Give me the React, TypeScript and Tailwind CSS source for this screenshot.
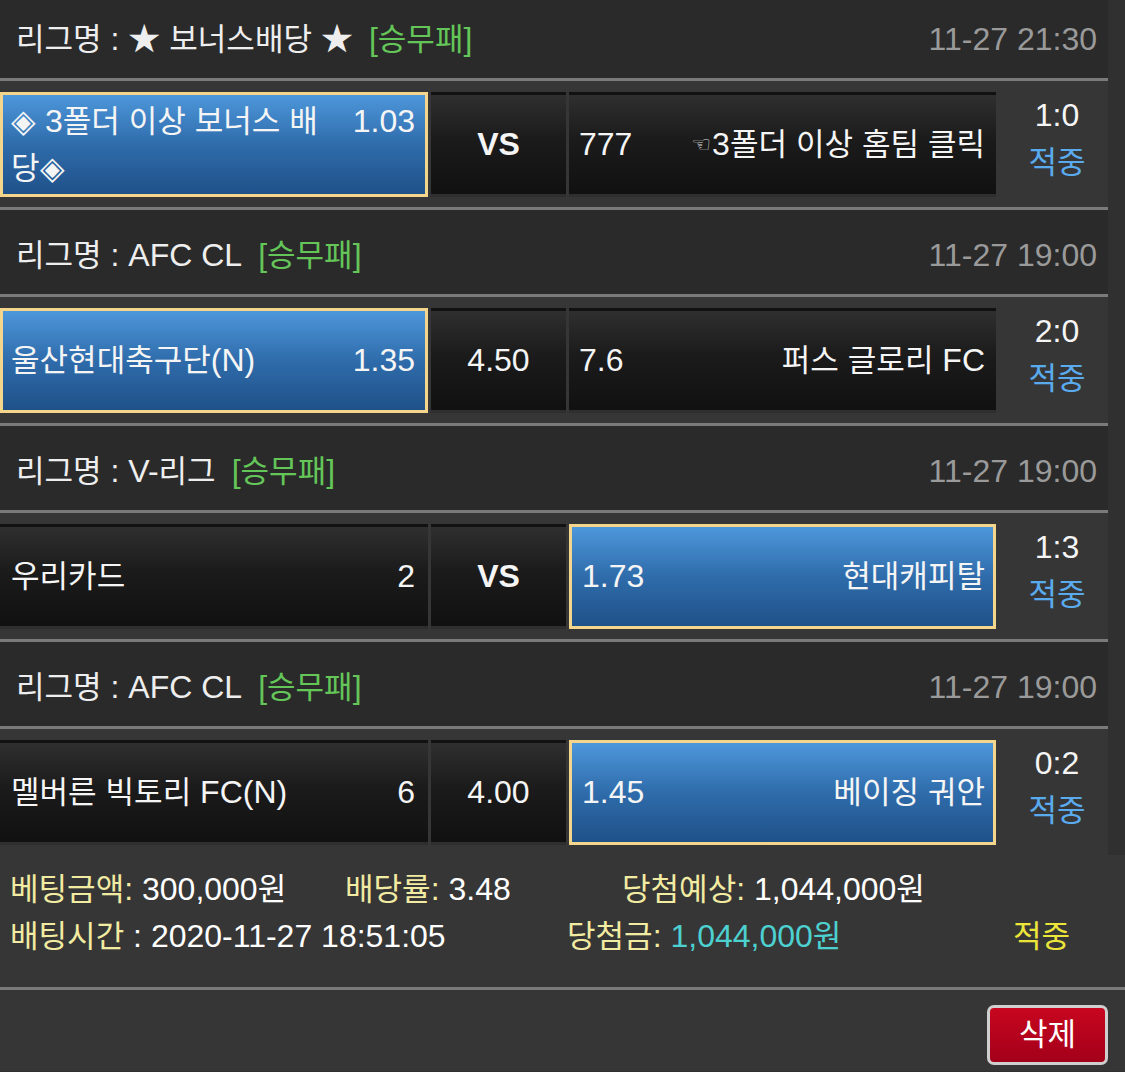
import React from "react";

const HANGUL = /([\u1100-\u11FF\u3130-\u318F\uAC00-\uD7AF]+)/;

function T({ s }: { s: string }) {
  const parts = s.split(HANGUL);
  return (
    <>
      {parts.map((p, i) =>
        i % 2 === 1 ? (
          <span key={i} className="text-[0.97em]">
            {p}
          </span>
        ) : (
          <React.Fragment key={i}>{p}</React.Fragment>
        )
      )}
    </>
  );
}

type Side = { name: string; odds: string; sel?: boolean; hand?: boolean };
type Match = {
  league: string;
  date: string;
  home: Side;
  draw: string;
  drawBold?: boolean;
  away: Side;
  score: string;
};

const matches: Match[] = [
  {
    league: "★ 보너스배당 ★",
    date: "11-27 21:30",
    home: { name: "◈ 3폴더 이상 보너스 배당◈", odds: "1.03", sel: true },
    draw: "VS",
    drawBold: true,
    away: { name: "3폴더 이상 홈팀 클릭", odds: "777", hand: true },
    score: "1:0",
  },
  {
    league: "AFC CL",
    date: "11-27 19:00",
    home: { name: "울산현대축구단(N)", odds: "1.35", sel: true },
    draw: "4.50",
    away: { name: "퍼스 글로리 FC", odds: "7.6" },
    score: "2:0",
  },
  {
    league: "V-리그",
    date: "11-27 19:00",
    home: { name: "우리카드", odds: "2" },
    draw: "VS",
    drawBold: true,
    away: { name: "현대캐피탈", odds: "1.73", sel: true },
    score: "1:3",
  },
  {
    league: "AFC CL",
    date: "11-27 19:00",
    home: { name: "멜버른 빅토리 FC(N)", odds: "6" },
    draw: "4.00",
    away: { name: "베이징 궈안", odds: "1.45", sel: true },
    score: "0:2",
  },
];

const cellBase = "h-[105px] border-[3px] flex items-center";
const darkCell =
  "border-transparent bg-[linear-gradient(to_bottom,#2f2f2f,#1b1b1b_45%,#111111)]";
const blueCell =
  "border-[#f3d68c] bg-[linear-gradient(to_bottom,#4d97db,#2f6cab_50%,#1f5189)]";

function HomeCell({ s }: { s: Side }) {
  return (
    <div className={`${cellBase} w-[428px] pl-[8px] pr-[10px] ${s.sel ? blueCell : darkCell}`}>
      <div className="flex w-full items-start justify-between">
        <div className="min-w-0 flex-1 pr-[14px] leading-[47px]">
          <T s={s.name} />
        </div>
        <div className="shrink-0 leading-[47px]">{s.odds}</div>
      </div>
    </div>
  );
}

function AwayCell({ s }: { s: Side }) {
  return (
    <div className={`${cellBase} w-[427px] pl-[7px] pr-[8px] ${s.sel ? blueCell : darkCell}`}>
      <div className="flex w-full items-center justify-between leading-[45px]">
        <div className={s.sel ? "pl-[3px]" : ""}>{s.odds}</div>
        <div className="flex items-center">
          {s.hand && (
            <span className="mr-[1px] font-['DejaVu_Sans',sans-serif] text-[22px] leading-none text-[#dddddd]">
              ☜
            </span>
          )}
          <span>
            <T s={s.name} />
          </span>
        </div>
      </div>
    </div>
  );
}

function League({ m, last }: { m: Match; last: boolean }) {
  return (
    <div>
      <div className="flex h-[84px] items-center justify-between bg-[#2a2a2a] pl-[16px] pr-[11px] pt-[6px]">
        <div className="flex items-center">
          <span className="text-[#eeeeee]">
            <T s={"리그명 : " + m.league} />
          </span>
          <span className="ml-[16px] text-[#64c659]">
            <T s="[승무패]" />
          </span>
        </div>
        <div className="text-[#9a9a9a]">{m.date}</div>
      </div>
      <div className="h-[3px] bg-[#7a7a7a]" />
      <div className="flex h-[126px] items-start bg-[#363636] pt-[11px] text-[#f5f5f5]">
        <HomeCell s={m.home} />
        <div
          className={`${cellBase} ${darkCell} ml-[3px] w-[135px] justify-center leading-[45px] ${
            m.drawBold ? "font-bold" : ""
          }`}
        >
          {m.draw}
        </div>
        <div className="ml-[3px]">
          <AwayCell s={m.away} />
        </div>
        <div className="flex w-[112px] flex-col items-center pl-[10px] leading-[47px]">
          <div className="text-[#f5f5f5]">{m.score}</div>
          <div className="text-[#5aaaee]">
            <T s="적중" />
          </div>
        </div>
      </div>
      {!last && <div className="h-[3px] bg-[#7a7a7a]" />}
    </div>
  );
}

export default function App() {
  return (
    <div className="h-[1072px] w-[1125px] overflow-hidden bg-[#303030] font-['Liberation_Sans','Noto_Sans_CJK_KR',sans-serif] text-[32px] text-white">
      <div className="-mt-[6px] w-[1108px]">
        {matches.map((m, i) => (
          <League key={i} m={m} last={i === matches.length - 1} />
        ))}
      </div>
      <div className="bg-[#363636] pb-[27px] pl-[10px] pt-[11px] leading-[47px]">
        <div className="flex">
          <div className="w-[335px]">
            <span className="text-[#f2eba2]">
              <T s="베팅금액:" />
            </span>{" "}
            <T s="300,000원" />
          </div>
          <div className="w-[277px]">
            <span className="text-[#f2eba2]">
              <T s="배당률:" />
            </span>{" "}
            3.48
          </div>
          <div>
            <span className="text-[#f2eba2]">
              <T s="당첨예상:" />
            </span>{" "}
            <T s="1,044,000원" />
          </div>
        </div>
        <div className="flex">
          <div className="w-[557px]">
            <span className="text-[#f2eba2]">
              <T s="배팅시간" />
            </span>{" "}
            : 2020-11-27 18:51:05
          </div>
          <div className="w-[446px]">
            <span className="text-[#f2eba2]">
              <T s="당첨금:" />
            </span>{" "}
            <span className="text-[#4dd0d0]">
              <T s="1,044,000원" />
            </span>
          </div>
          <div className="text-[#ece53a]">
            <T s="적중" />
          </div>
        </div>
      </div>
      <div className="h-[3px] bg-[#7a7a7a]" />
      <div className="flex h-[81px] justify-end bg-[#363636] pr-[17px] pt-[15px]">
        <button className="flex h-[60px] w-[121px] items-center justify-center rounded-[7px] border-[3px] border-[#cfcfcf] bg-[linear-gradient(to_bottom,#c8061f,#a3001a)] text-white">
          <T s="삭제" />
        </button>
      </div>
    </div>
  );
}
